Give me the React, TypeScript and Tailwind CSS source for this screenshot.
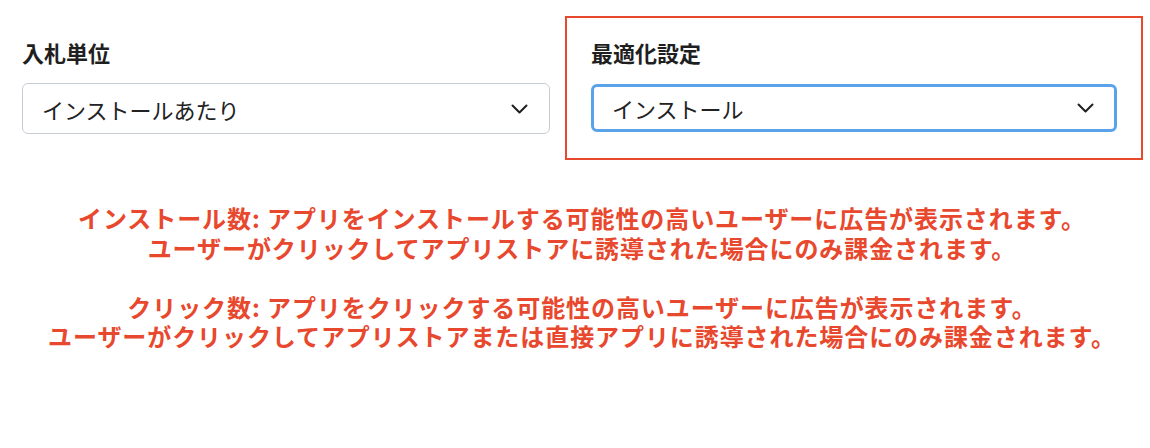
import React from "react";

function Chevron() {
  return (
    <svg width="17" height="10" viewBox="0 0 17 10" fill="none" className="shrink-0">
      <polyline
        points="1.5,1.5 8.5,8.5 15.5,1.5"
        stroke="#1f1f1f"
        strokeWidth="2"
        strokeLinecap="round"
        strokeLinejoin="round"
      />
    </svg>
  );
}

function SelectBox({ value, focused }: { value: string; focused?: boolean }) {
  return (
    <div
      className={
        focused
          ? "mt-[17px] flex h-[48px] items-center justify-between rounded-[6px] border-[3px] border-[#5aa2ea] pl-[18px] pr-[20px]"
          : "mt-[16px] flex h-[51px] items-center justify-between rounded-[6px] border-[1.5px] border-[#c6cdd4] pl-[19px] pr-[21px]"
      }
    >
      <span className="text-[22px] leading-[30px] text-[#222]">{value}</span>
      <Chevron />
    </div>
  );
}

export default function App() {
  return (
    <div className="h-[448px] w-[1150px] bg-white font-['Noto_Sans_CJK_JP','Noto_Sans',sans-serif]">
      <div className="flex pl-[22px] pt-[16px]">
        <div className="w-[528px] pt-[21px]">
          <h2 className="text-[22px] font-bold leading-[30px] text-[#1f1f1f]">入札単位</h2>
          <SelectBox value="インストールあたり" />
        </div>
        <div className="ml-[15px] w-[578px] border-2 border-[#e8482d] px-[24px] pb-[26px] pt-[19px]">
          <h2 className="text-[22px] font-bold leading-[30px] text-[#1f1f1f]">最適化設定</h2>
          <SelectBox value="インストール" focused />
        </div>
      </div>

      <div className="mt-[43px] pl-[14px] text-center text-[24px] font-bold leading-[29.5px] tracking-[0.92px] text-[#e8482d]">
        <p>インストール数: アプリをインストールする可能性の高いユーザーに広告が表示されます。</p>
        <p>ユーザーがクリックしてアプリストアに誘導された場合にのみ課金されます。</p>
        <p>&nbsp;</p>
        <p>クリック数: アプリをクリックする可能性の高いユーザーに広告が表示されます。</p>
        <p>ユーザーがクリックしてアプリストアまたは直接アプリに誘導された場合にのみ課金されます。</p>
      </div>
    </div>
  );
}
